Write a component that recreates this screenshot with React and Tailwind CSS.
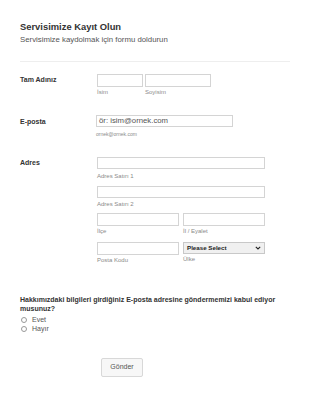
import React from "react";

function Field({ w, h = 13, placeholder, sub, subCls = "text-[6px] leading-[8px] mt-[1px]" }) {
  return (
    <div className="flex flex-col" style={{ width: w }}>
      <div
        className="border border-[#d4d4d4] bg-white flex items-center px-[2px] text-[7.75px] text-[#555]"
        style={{ height: h }}
      >
        {placeholder}
      </div>
      {sub && <div className={`${subCls} text-[#8a8a8a] whitespace-nowrap`}>{sub}</div>}
    </div>
  );
}

export default function App() {
  return (
    <div className="w-[310px] h-[404px] bg-white overflow-hidden font-['Liberation_Sans',Arial,sans-serif] px-[20px] pt-[21px]">
      <div className="text-[9.4px] leading-[12px] font-bold text-[#333]">Servisimize Kayıt Olun</div>
      <div className="mt-[2px] text-[7.8px] leading-[9px] text-[#555]">Servisimize kaydolmak için formu doldurun</div>
      <div className="mt-[17px] border-t border-[#eeeeee] w-[270px]" />

      {/* Name */}
      <div className="mt-[12px] flex">
        <div className="w-[77px] mt-[1px] text-[7px] leading-[9px] font-bold text-[#333]">Tam Adınız</div>
        <div className="flex gap-[2px]">
          <Field w={46} sub="İsim" />
          <Field w={66} sub="Soyisim" />
        </div>
      </div>

      {/* Email */}
      <div className="mt-[19px] flex">
        <div className="w-[76px] mt-[2px] text-[7px] leading-[9px] font-bold text-[#333]">E-posta</div>
        <Field
          w={137}
          h={12}
          placeholder="ör: isim@ornek.com"
          sub="ornek@ornek.com"
          subCls="text-[5px] leading-[7px] mt-[4px]"
        />
      </div>

      {/* Address */}
      <div className="mt-[19px] flex">
        <div className="w-[77px] mt-[1px] text-[7px] leading-[9px] font-bold text-[#333]">Adres</div>
        <div className="flex flex-col">
          <Field w={168} h={12} sub="Adres Satırı 1" subCls="text-[6px] leading-[8px] mt-[3px]" />
          <div className="mt-[6px]">
            <Field w={168} h={12} sub="Adres Satırı 2" subCls="text-[6px] leading-[8px] mt-[2px]" />
          </div>
          <div className="mt-[5px] flex gap-[4px]">
            <Field w={82} sub="İlçe" />
            <Field w={82} sub="İl / Eyalet" />
          </div>
          <div className="mt-[7px] flex gap-[4px] items-start">
            <Field w={82} sub="Posta Kodu" />
            <div className="flex flex-col w-[82px]">
              <div className="h-[12px] border border-[#c8c8c8] bg-[#f0f0f0] flex items-center justify-between pl-[3px] pr-[3px]">
                <span className="text-[6.2px] font-bold text-[#222]">Please Select</span>
                <svg width="6" height="4" viewBox="0 0 6 4">
                  <path d="M0.8 0.8 L3 3 L5.2 0.8" fill="none" stroke="#222" strokeWidth="1.1" />
                </svg>
              </div>
              <div className="text-[6px] leading-[8px] mt-[1px] text-[#8a8a8a]">Ülke</div>
            </div>
          </div>
        </div>
      </div>

      {/* Question */}
      <div className="mt-[31px] text-[7px] leading-[9px] font-bold text-[#333] w-[270px]">
        Hakkımızdaki bilgileri girdiğiniz E-posta adresine göndermemizi kabul ediyor musunuz?
      </div>
      <div className="mt-[2px] flex flex-col">
        {["Evet", "Hayır"].map((t) => (
          <div key={t} className="flex items-center h-[9px]">
            <span className="ml-[1px] w-[6px] h-[6px] rounded-full border border-[#999] bg-white" />
            <span className="ml-[5px] text-[7px] leading-[9px] text-[#555]">{t}</span>
          </div>
        ))}
      </div>

      <div className="mt-[25px] ml-[81px]">
        <div className="w-[42px] h-[19px] border border-[#d8d8d8] rounded-[2px] bg-[#f7f7f7] flex items-center justify-center text-[7px] text-[#555]">
          Gönder
        </div>
      </div>
    </div>
  );
}
